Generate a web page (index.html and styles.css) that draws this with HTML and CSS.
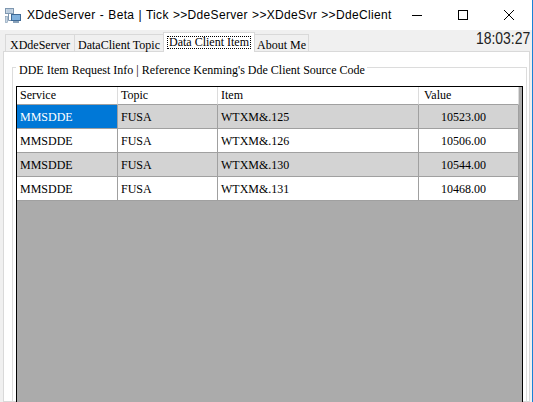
FILE: index.html
```html
<!DOCTYPE html>
<html>
<head>
<meta charset="utf-8">
<link rel="stylesheet" href="styles.css">
</head>
<body>
<div class="window">
  <header class="titlebar">
    <svg class="app-icon" width="16" height="16" viewBox="0 0 16 16">
      <rect x="0.5" y="0.5" width="8" height="5" fill="#d6e2ee" stroke="#7e97b0"/>
      <rect x="1.5" y="1.5" width="6" height="1" fill="#9fb6cc"/>
      <rect x="1.5" y="3.5" width="6" height="1" fill="#9fb6cc"/>
      <path d="M3.5 6V12.5H6" fill="none" stroke="#7e97b0"/>
      <rect x="6.5" y="6.5" width="9" height="6" fill="#7fb0dc" stroke="#3f6a96"/>
      <rect x="8" y="13" width="6" height="2" fill="#8aa2ba"/>
      <rect x="0.5" y="8.5" width="2" height="6" fill="#c8d6e4" stroke="#7e97b0" stroke-width="0.6"/>
    </svg>
    <span class="title">XDdeServer - Beta | Tick &gt;&gt;DdeServer &gt;&gt;XDdeSvr &gt;&gt;DdeClient</span>
    <div class="caption-buttons">
      <span class="cbtn"><svg width="10" height="10" viewBox="0 0 10 10"><path d="M0 5.5H10" stroke="#000" stroke-width="1"/></svg></span>
      <span class="cbtn"><svg width="10" height="10" viewBox="0 0 10 10"><rect x="0.5" y="0.5" width="9" height="9" fill="none" stroke="#000" stroke-width="1"/></svg></span>
      <span class="cbtn"><svg width="10" height="10" viewBox="0 0 10 10"><path d="M0 0L10 10M10 0L0 10" stroke="#000" stroke-width="1"/></svg></span>
    </div>
  </header>
  <div class="client">
    <div class="tabstrip">
      <div class="tab t1">XDdeServer</div>
      <div class="tab t2">DataClient Topic</div>
      <div class="tab active"><span class="focus">Data Client Item</span></div>
      <div class="tab t4">About Me</div>
      <div class="clock">18:03:27</div>
    </div>
    <div class="tabpage">
      <fieldset class="group">
        <legend>DDE Item Request Info | Reference Kenming's Dde Client Source Code</legend>
        <div class="grid">
          <div class="grid-rows">
            <div class="hcell">Service</div>
            <div class="hcell">Topic</div>
            <div class="hcell">Item</div>
            <div class="hcell">Value</div>

            <div class="cell alt selected">MMSDDE</div>
            <div class="cell alt">FUSA</div>
            <div class="cell alt">WTXM&amp;.125</div>
            <div class="cell alt num">10523.00</div>

            <div class="cell">MMSDDE</div>
            <div class="cell">FUSA</div>
            <div class="cell">WTXM&amp;.126</div>
            <div class="cell num">10506.00</div>

            <div class="cell alt">MMSDDE</div>
            <div class="cell alt">FUSA</div>
            <div class="cell alt">WTXM&amp;.130</div>
            <div class="cell alt num">10544.00</div>

            <div class="cell">MMSDDE</div>
            <div class="cell">FUSA</div>
            <div class="cell">WTXM&amp;.131</div>
            <div class="cell num">10468.00</div>
          </div>
        </div>
      </fieldset>
    </div>
  </div>
</div>
</body>
</html>
```

FILE: styles.css
```css
html, body {
  margin: 0;
  padding: 0;
  width: 533px;
  height: 402px;
  overflow: hidden;
  background: #f0f0f0;
}

.window {
  width: 533px;
  height: 402px;
  box-sizing: border-box;
  border-right: 1px solid #1883d7;
  display: flex;
  flex-direction: column;
  overflow: hidden;
}

.titlebar {
  height: 30px;
  flex: 0 0 30px;
  background: #ffffff;
  display: flex;
  align-items: center;
}

.app-icon {
  margin-left: 5px;
  margin-top: 1px;
  flex: 0 0 16px;
}

.title {
  margin-left: 6px;
  font-family: "Liberation Sans", Arial, sans-serif;
  font-size: 12px;
  letter-spacing: 0.33px;
  word-spacing: 0.5px;
  color: #000;
  white-space: nowrap;
  line-height: 30px;
}

.caption-buttons {
  margin-left: auto;
  display: flex;
  height: 30px;
}

.cbtn {
  width: 46px;
  height: 30px;
  display: flex;
  align-items: center;
  justify-content: center;
}

.client {
  flex: 1 1 auto;
  display: flex;
  flex-direction: column;
  background: #f0f0f0;
  min-height: 0;
}

.tabstrip {
  height: 21px;
  flex: 0 0 21px;
  display: flex;
  align-items: flex-end;
  padding-left: 5px;
  padding-right: 2px;
  position: relative;
  z-index: 1;
  font-family: "Liberation Serif", "Times New Roman", serif;
  font-size: 12px;
  color: #000;
}

.tab {
  box-sizing: border-box;
  height: 17px;
  border: 1px solid #d9d9d9;
  border-bottom: none;
  background: #f0f0f0;
  line-height: 14px;
  padding-top: 3px;
  text-align: center;
  white-space: nowrap;
}

.t1 { width: 70px; }
.t2 { width: 89px; border-left: none; }
.t4 { width: 55px; margin-left: -1px; }

.tab.active {
  width: 92px;
  height: 20px;
  margin-left: -1px;
  margin-bottom: -1px;
  background: #ffffff;
  padding-top: 2px;
  position: relative;
  z-index: 2;
}

.focus {
  display: inline-block;
  border: 1px dotted #000;
  padding: 0 1px;
  line-height: 11px;
  height: 11px;
}

.clock {
  margin-left: auto;
  align-self: flex-start;
  font-family: "Liberation Sans", Arial, sans-serif;
  font-size: 17px;
  line-height: 17px;
  margin-top: 0;
  color: #222;
  -webkit-text-stroke: 0;
  transform: scaleX(0.82);
  transform-origin: right center;
}

.tabpage {
  flex: 1 1 auto;
  margin: 0 2px 0 3px;
  border: 1px solid #d9d9d9;
  background: #ffffff;
  min-height: 0;
  display: flex;
  flex-direction: column;
}

.group {
  margin: 6px 2px 0 8px;
  padding: 0 3px;
  border: 1px solid #dcdcdc;
  min-width: 0;
  flex: 1 1 auto;
  display: flex;
  flex-direction: column;
}

.group legend {
  font-family: "Liberation Serif", "Times New Roman", serif;
  font-size: 12px;
  line-height: 14px;
  padding: 5px 2px 0 3px;
  margin: 0;
  color: #000;
  white-space: nowrap;
}

.grid {
  margin-top: 9px;
  height: 340px;
  border: 1px solid #000;
  background: #ababab;
  font-family: "Liberation Serif", "Times New Roman", serif;
  font-size: 12px;
  color: #000;
}

.grid-rows {
  display: grid;
  grid-template-columns: 101px 100px 201px 100px;
  width: 502px;
}

.hcell {
  box-sizing: border-box;
  height: 18px;
  line-height: 17px;
  background: #ffffff;
  border-right: 1px solid #dcdcdc;
  border-bottom: 1px solid #a0a0a0;
  padding-left: 3px;
  white-space: nowrap;
}

.hcell:nth-child(4) {
  padding-left: 5px;
}

.cell {
  box-sizing: border-box;
  height: 24px;
  line-height: 24px;
  background: #ffffff;
  border-right: 1px solid #a0a0a0;
  border-bottom: 1px solid #a0a0a0;
  padding-left: 3px;
  white-space: nowrap;
}

.cell.alt {
  background: #d3d3d3;
}

.cell.selected {
  background: #0078d7;
  color: #ffffff;
}

.cell.num {
  text-align: right;
  padding-right: 32px;
  padding-left: 0;
}
```
